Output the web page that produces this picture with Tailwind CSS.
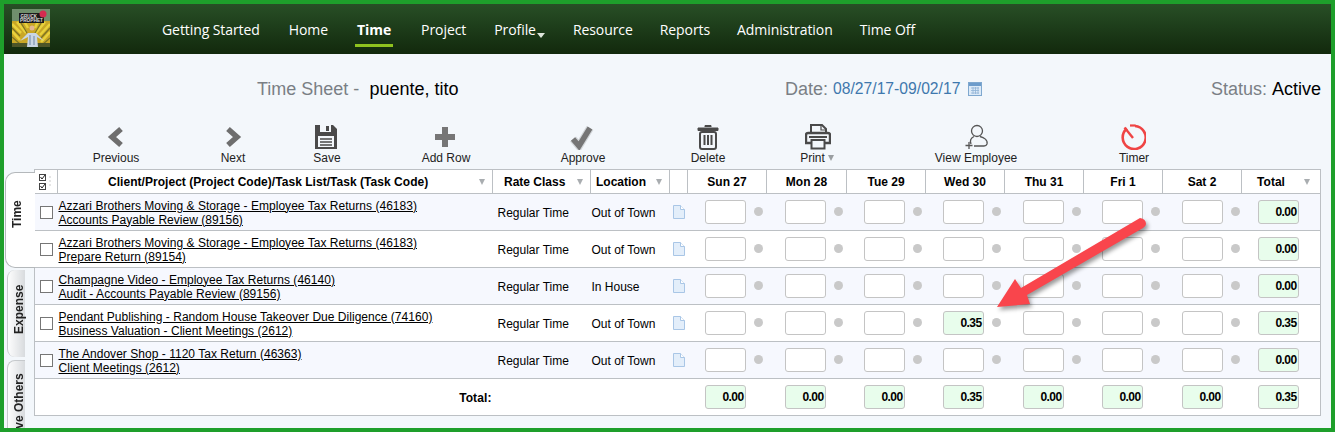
<!DOCTYPE html>
<html lang="en">
<head>
    <meta charset="UTF-8">
    <meta name="viewport" content="width=device-width, initial-scale=1.0">
    <title>Time Sheet</title>
    <script src="https://cdn.jsdelivr.net/npm/@tailwindcss/browser@4"></script>
</head>
<body class="overflow-hidden">
<div class="relative h-[432px] w-[1335px] overflow-hidden border-4 border-[#1e9f2b] bg-[#f3f7fb] font-['Liberation_Sans',Arial,sans-serif] text-xs text-black">

    <!-- top nav -->
    <header class="flex h-[50px] items-start bg-gradient-to-b from-[#284f26] to-[#12290d]">
        <svg class="ml-2 mt-[5px] shrink-0" width="38" height="38" viewBox="0 0 38 38">
            <rect width="38" height="38" fill="#c9a726"/>
            <rect width="38" height="12" fill="#6f8f6c"/>
            <path d="M0 15 L9 24 M0 22 L8 31 M38 15 L28 26 M38 23 L29 33 M5 13 L14 24 M33 13 L24 24 M12 12 L16 19 M26 12 L23 19" stroke="#e8d23c" stroke-width="2.500"/>
            <path d="M0 19 L8 27 M0 28 L8 35 M38 19 L29 29 M38 29 L30 36 M9 14 L15 24 M29 14 L23 24" stroke="#7b7424" stroke-width="1.200"/>
            <rect y="34" width="38" height="4" fill="#4d5528"/>
            <rect x="7" y="4" width="25" height="10" fill="#1b1b1b"/>
            <text x="8.500" y="8.500" font-size="4.500" font-weight="700" fill="#ddd">GRUCK</text>
            <text x="8" y="13.300" font-size="4.500" font-weight="700" textLength="23" lengthAdjust="spacingAndGlyphs" fill="#ddd">PROPHET</text>
            <circle cx="31" cy="5" r="3.500" fill="#d62b50"/>
            <circle cx="20" cy="19" r="2.500" fill="#e3b690"/>
            <path d="M8 32 L16 24 H24 L32 32 L25 28 L26 38 H15 L16 28 Z" fill="#c9d6e4"/>
            <path d="M18 26v10M22 27v9" stroke="#6e86a6" stroke-width="1"/>
        </svg>
        <nav class="ml-[112px] flex h-[50px] gap-[28px] font-['Open_Sans',sans-serif] text-[14px] leading-[51px] tracking-[-0.08px] text-white">
            <a>Getting Started</a>
            <a class="ml-[1px]">Home</a>
            <a class="relative ml-[1px] font-bold">Time<span class="absolute -left-[2px] -right-[2px] top-[40px] h-[3px] bg-[#8fc21f]"></span></a>
            <a class="ml-[2px]">Project</a>
            <a class="relative">Profile<span class="absolute -right-[9px] top-[29px] h-0 w-0 border-x-[4px] border-t-[5px] border-x-transparent border-t-[#dfe6dc]"></span></a>
            <a class="ml-[9px]">Resource</a>
            <a class="-ml-[1px]">Reports</a>
            <a class="-ml-[1px]">Administration</a>
            <a class="-ml-[1px]">Time Off</a>
        </nav>
    </header>

    <!-- title line -->
    <div class="flex h-[70px] items-center pl-[253px] pr-[10px] text-[18px] text-[#7a7f85]">
        <div class="w-[528px]">Time Sheet -<span class="ml-[10px] text-black">puente, tito</span></div>
        <div class="flex items-center">Date:<span class="ml-[5px] text-[15.700px] text-[#3f78ad]">08/27/17-09/02/17</span>
            <svg class="ml-[8px]" width="14" height="14" viewBox="0 0 14 14"><rect x=".5" y=".5" width="13" height="13" fill="#dceaf7" stroke="#7fa8cf"/><rect x="1" y="1" width="12" height="3" fill="#6d9ccb"/><path d="M3 6h8M3 8.500h8M3 11h8M5 5v7M7.500 5v7M10 5v7" stroke="#8fb3d6" stroke-width=".8"/></svg>
        </div>
        <div class="ml-auto">Status:<span class="ml-[5px] text-black">Active</span></div>
    </div>

    <!-- toolbar -->
    <div class="flex h-[45px] pl-[72px] text-center text-[#222]">
        <div class="w-[80px]">
            <svg class="mx-auto" width="26" height="26" viewBox="0 0 26 26"><path d="M18 5 L9 13 L18 21" fill="none" stroke="#6e6e6e" stroke-width="5.500"/></svg>
            <div>Previous</div>
        </div>
        <div class="ml-[37px] w-[80px]">
            <svg class="mx-auto" width="26" height="26" viewBox="0 0 26 26"><path d="M8 5 L17 13 L8 21" fill="none" stroke="#6e6e6e" stroke-width="5.500"/></svg>
            <div>Next</div>
        </div>
        <div class="ml-[14px] w-[80px]">
            <svg class="mx-auto -translate-x-[1px]" width="26" height="26" viewBox="0 0 26 26"><path d="M2 1 H20 L24 5 V25 H2 Z" fill="#4a4a4a"/><rect x="7" y="1" width="11" height="7" fill="#f3f7fb"/><rect x="13" y="2" width="3" height="5" fill="#4a4a4a"/><rect x="5" y="12" width="16" height="11" fill="#f3f7fb"/><path d="M7 15h12M7 18h12M7 21h12" stroke="#4a4a4a" stroke-width="1.400"/></svg>
            <div>Save</div>
        </div>
        <div class="ml-[39px] w-[80px]">
            <svg class="mx-auto -translate-x-[1px]" width="26" height="26" viewBox="0 0 26 26"><path d="M10 3h6v7h7v6h-7v7h-6v-7H3v-6h7z" fill="#767676"/></svg>
            <div>Add Row</div>
        </div>
        <div class="ml-[57px] w-[80px]">
            <svg class="mx-auto -translate-x-[1px]" width="26" height="26" viewBox="0 0 26 26"><path d="M4 15 L10 22 L21 4" fill="none" stroke="#d3d7da" stroke-width="8"/><path d="M4 15 L10 22 L21 4" fill="none" stroke="#757575" stroke-width="5.500"/></svg>
            <div>Approve</div>
        </div>
        <div class="ml-[45px] w-[80px]">
            <svg class="mx-auto" width="26" height="26" viewBox="0 0 26 26"><path d="M10 3V1.500h6V3M3 4h20v2.500H3z" fill="#4a4a4a" stroke="#4a4a4a"/><rect x="5" y="8" width="16" height="17" rx="2" fill="none" stroke="#4a4a4a" stroke-width="2"/><path d="M9.500 11v10M13 11v10M16.500 11v10" stroke="#4a4a4a" stroke-width="2"/></svg>
            <div>Delete</div>
        </div>
        <div class="ml-[29px] w-[80px]">
            <svg class="mx-auto translate-x-[1px]" width="26" height="26" viewBox="0 0 26 26"><path d="M6 9V1h11l4 4v4" fill="none" stroke="#4a4a4a" stroke-width="2"/><path d="M16 1v5h5" fill="none" stroke="#4a4a4a" stroke-width="1.200"/><path d="M6 19H1V11a2 2 0 0 1 2-2h20a2 2 0 0 1 2 2v8h-5" fill="none" stroke="#4a4a4a" stroke-width="2.400"/><rect x="6.500" y="16" width="13" height="8.500" fill="none" stroke="#4a4a4a" stroke-width="2"/><path d="M4 13h18" stroke="#4a4a4a" stroke-width="2"/></svg>
            <div class="flex items-center justify-center gap-[3px]">Print<span class="h-0 w-0 border-x-[3px] border-t-[6px] border-x-transparent border-t-[#9a9ea1]"></span></div>
        </div>
        <div class="ml-[74px] w-[90px]">
            <svg class="mx-auto" width="26" height="26" viewBox="0 0 26 26"><circle cx="14" cy="7" r="5.500" fill="none" stroke="#555" stroke-width="1.300"/><path d="M8 20 C6 15 10 13 11 12.500 M17 12.500 C21 13.500 25 16 24 20 C23.500 21.500 22 22 21 22 H11" fill="none" stroke="#555" stroke-width="1.300"/><path d="M6 18v7M2.500 21.500h7" stroke="#555" stroke-width="1.300"/></svg>
            <div>View Employee</div>
        </div>
        <div class="ml-[73px] w-[80px]">
            <svg class="mx-auto -translate-x-[1px]" width="26" height="26" viewBox="0 0 26 26"><path d="M7 4.500 A11.500 11.500 0 1 0 15 2" fill="none" stroke="#ef4444" stroke-width="2.600"/><path d="M10 1.500h5.500" stroke="#ef4444" stroke-width="2.200"/><path d="M4.500 3.500 L13 14" stroke="#ef4444" stroke-width="2.400"/></svg>
            <div>Timer</div>
        </div>
    </div>

    <!-- tabs + grid -->
    <div class="flex items-start">
        <div class="relative z-10 -mr-px w-[31px] shrink-0 font-bold text-[#222]">
            <div class="ml-[1px] mt-[3px] flex h-[96px] w-[30px] rotate-180 items-start justify-end rounded-r-[10px] border border-l-0 border-[#b4b8bb] bg-white [writing-mode:vertical-rl]">
                <span class="mb-[27px] mr-[3px]">Time</span>
            </div>
            <div class="ml-[3px] mt-[2px] flex h-[87px] w-[18px] rotate-180 items-start justify-end rounded-r-[8px] border-r border-[#c6c9cc] bg-gradient-to-l from-[#fdfdfd] to-[#d8dbde] [writing-mode:vertical-rl]">
                <span class="mb-[15px] mr-[3px]">Expense</span>
            </div>
            <div class="ml-[3px] mt-[3px] flex h-[70px] w-[18px] rotate-180 items-start justify-end rounded-br-[8px] border-b border-r border-[#c6c9cc] bg-gradient-to-l from-[#fdfdfd] to-[#d8dbde] [writing-mode:vertical-rl]">
                <span class="mb-[12px] mr-[3px] shrink-0 whitespace-nowrap">Approve Others</span>
            </div>
        </div>

        <table class="w-[1287px] table-fixed border-collapse border border-[#bcc0c4] bg-white">
            <colgroup>
                <col class="w-[23px]"><col class="w-[435px]"><col class="w-[98px]"><col class="w-[79px]"><col class="w-[18px]">
                <col class="w-[79px]"><col class="w-[80px]"><col class="w-[79px]"><col class="w-[79px]"><col class="w-[79px]"><col class="w-[79px]"><col class="w-[79px]"><col class="w-[79px]">
            </colgroup>
            <thead>
                <tr class="h-[24px] font-bold">
                    <th class="border border-[#bcc0c4] p-0">
                        <svg class="ml-[4px] block" width="12" height="16" viewBox="0 0 12 16"><rect x=".5" y=".5" width="6" height="6" fill="#fff" stroke="#444"/><rect x=".5" y="9.500" width="6" height="6" fill="#fff" stroke="#444"/><path d="M1.500 3l1.500 2 3-4M1.500 12l1.500 2 3-4" fill="none" stroke="#222"/><path d="M11 2v12" stroke="#ccc" stroke-dasharray="2 2"/></svg>
                    </th>
                    <th class="relative border border-[#bcc0c4] p-0 pl-[50px] text-left tracking-[0.04px]">Client/Project (Project Code)/Task List/Task (Task Code)<span class="absolute right-[7px] top-[9px] h-0 w-0 border-x-[3px] border-t-[6px] border-x-transparent border-t-[#a9adb0]"></span></th>
                    <th class="relative border border-[#bcc0c4] p-0 pl-[11px] text-left">Rate Class<span class="absolute right-[7px] top-[9px] h-0 w-0 border-x-[3px] border-t-[6px] border-x-transparent border-t-[#a9adb0]"></span></th>
                    <th class="relative border border-[#bcc0c4] p-0 pl-[5px] text-left">Location<span class="absolute right-[7px] top-[9px] h-0 w-0 border-x-[3px] border-t-[6px] border-x-transparent border-t-[#a9adb0]"></span></th>
                    <th class="border border-[#bcc0c4] p-0"></th>
                    <th class="border border-[#bcc0c4] p-0">Sun 27</th>
                    <th class="border border-[#bcc0c4] p-0">Mon 28</th>
                    <th class="border border-[#bcc0c4] p-0">Tue 29</th>
                    <th class="border border-[#bcc0c4] p-0">Wed 30</th>
                    <th class="border border-[#bcc0c4] p-0">Thu 31</th>
                    <th class="border border-[#bcc0c4] p-0">Fri 1</th>
                    <th class="border border-[#bcc0c4] p-0">Sat 2</th>
                    <th class="relative border border-[#bcc0c4] p-0 pr-[20px]">Total<span class="absolute right-[10px] top-[9px] h-0 w-0 border-x-[3px] border-t-[6px] border-x-transparent border-t-[#a9adb0]"></span></th>
                </tr>
            </thead>
            <tbody id="rows"></tbody>
        </table>
    </div>

    <!-- red callout arrow -->
    <svg class="absolute left-[-4px] top-[-4px] z-20 drop-shadow-[2px_3px_2px_rgba(0,0,0,0.4)]" width="1335" height="432" viewBox="0 0 1335 432">
        <path d="M1140 218 Q1146 219 1146 224 Q1146 226 1143 228 L1027 295 L1030 304 L997 307 L1015 279 L1021 288 Z" fill="#f9454c"/>
    </svg>
</div>

<script>
    const rows = [
        { client: "Azzari Brothers Moving & Storage - Employee Tax Returns (46183)", task: "Accounts Payable Review (89156)", location: "Out of Town", wed: "", total: "0.00" },
        { client: "Azzari Brothers Moving & Storage - Employee Tax Returns (46183)", task: "Prepare Return (89154)", location: "Out of Town", wed: "", total: "0.00" },
        { client: "Champagne Video - Employee Tax Returns (46140)", task: "Audit - Accounts Payable Review (89156)", location: "In House", wed: "", total: "0.00" },
        { client: "Pendant Publishing - Random House Takeover Due Diligence (74160)", task: "Business Valuation - Client Meetings (2612)", location: "Out of Town", wed: "0.35", total: "0.35" },
        { client: "The Andover Shop - 1120 Tax Return (46363)", task: "Client Meetings (2612)", location: "Out of Town", wed: "", total: "0.00" }
    ];
    const dayTotals = ["0.00", "0.00", "0.00", "0.35", "0.00", "0.00", "0.00"];
    // inputs do not sit exactly evenly across the day columns
    const offsets = ["pl-[17px]", "pl-[18px]", "pl-[17px]", "pl-[17px]", "pl-[18px]", "pl-[18px]", "pl-[19px]"];

    const box = (value) => `<div class="flex h-[24px] w-[41px] items-center justify-end rounded-[3px] border border-[#c4c4c4] bg-[#e8fdec] pr-[1px] font-bold tracking-[-0.6px]">${value}</div>`;
    const emptyBox = `<input class="block h-[24px] w-[41px] rounded-[3px] border border-[#c4c4c4] bg-white">`;
    const note = `<svg width="12" height="14" viewBox="0 0 12 14"><path d="M.5.500h7l4 4v9H.5z" fill="#e3eefa" stroke="#a9c6e6"/><path d="M7.500.500v4h4" fill="#fff" stroke="#a9c6e6"/></svg>`;

    let html = "";
    rows.forEach((row, i) => {
        let days = "";
        offsets.forEach((offset, d) => {
            const cell = d === 3 && row.wed ? box(row.wed) : emptyBox;
            days += `<td class="p-0 ${offset}"><div class="flex items-center gap-[8px]">${cell}<span class="-mt-[2px] h-[9px] w-[9px] rounded-full bg-[#c9c9c9]"></span></div></td>`;
        });
        html += `<tr class="h-[37px] border-b border-[#bcc0c4] ${i % 2 === 0 ? "bg-[#f6f8fe]" : "bg-white"}">
            <td class="p-0 pl-[5px]"><input type="checkbox" class="block h-[13px] w-[13px] appearance-none border border-[#767676] bg-white"></td>
            <td class="p-0 pl-[1px] pt-[1px] leading-[14px] tracking-[0.03px]"><a class="block underline">${row.client}</a><a class="block underline">${row.task}</a></td>
            <td class="p-0 pl-[5px] pt-[1px]">Regular Time</td>
            <td class="p-0 pl-[1px] pt-[1px]">${row.location}</td>
            <td class="p-0 pl-[3px]">${note}</td>
            ${days}
            <td class="p-0 pl-[16px]">${box(row.total)}</td>
        </tr>`;
    });

    let totals = "";
    dayTotals.forEach((value, d) => {
        totals += `<td class="p-0 ${offsets[d]}">${box(value)}</td>`;
    });
    html += `<tr class="h-[37px] bg-white">
        <td colspan="2" class="p-0 pr-[1px] pt-[1px] text-right font-bold tracking-[0.1px]">Total:</td>
        <td colspan="3"></td>
        ${totals}
        <td class="p-0 pl-[16px]">${box("0.35")}</td>
    </tr>`;
    document.getElementById("rows").innerHTML = html;
</script>
</body>
</html>
